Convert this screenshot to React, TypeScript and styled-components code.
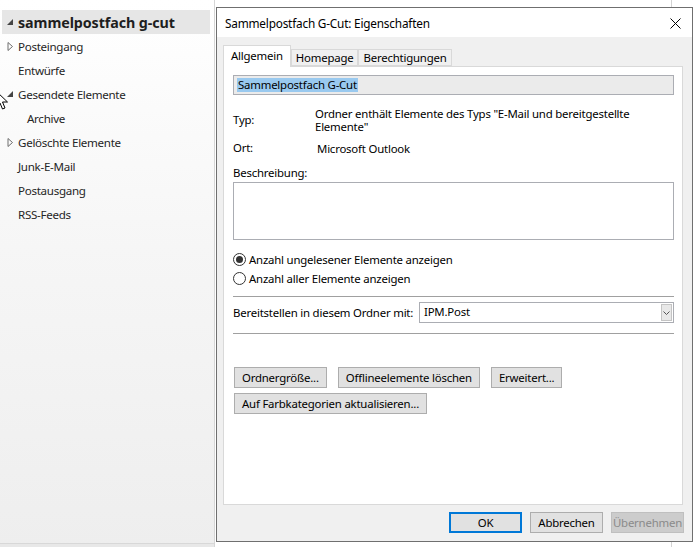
import React from 'react';
import styled, { createGlobalStyle } from 'styled-components';

const GlobalStyle = createGlobalStyle`
  html, body {
    margin: 0;
    padding: 0;
    background: #ffffff;
  }
  body {
    font-family: "Segoe UI", "Noto Sans", "Liberation Sans", sans-serif;
    font-size: 11.4px;
    letter-spacing: -0.2px;
    color: #000000;
  }
  * {
    box-sizing: border-box;
  }
`;

interface Folder {
  name: string;
  indent: number;
  arrow: 'none' | 'collapsed' | 'expanded';
}

const folders: Folder[] = [
  { name: 'Posteingang', indent: 0, arrow: 'collapsed' },
  { name: 'Entwürfe', indent: 0, arrow: 'none' },
  { name: 'Gesendete Elemente', indent: 0, arrow: 'expanded' },
  { name: 'Archive', indent: 1, arrow: 'none' },
  { name: 'Gelöschte Elemente', indent: 0, arrow: 'collapsed' },
  { name: 'Junk-E-Mail', indent: 0, arrow: 'none' },
  { name: 'Postausgang', indent: 0, arrow: 'none' },
  { name: 'RSS-Feeds', indent: 0, arrow: 'none' }
];

const Page = styled.div`
  position: relative;
  display: flex;
  width: 695px;
  height: 547px;
  overflow: hidden;
`;

// Ordnerbereich links
const FolderPane = styled.nav`
  width: 215px;
  flex-shrink: 0;
  display: flex;
  flex-direction: column;
  padding-top: 10px;
  border-right: 1px solid #d6d6d6;
  background: linear-gradient(to bottom, #ffffff 0%, #f6f6f6 45%, #eeeeee 100%);
`;

const AccountRow = styled.div`
  display: flex;
  align-items: center;
  height: 24px;
  margin: 0 4px 0 2px;
  padding-left: 5px;
  gap: 5px;
  background: #e6e6e6;
  font-size: 14.3px;
  font-weight: 700;
  letter-spacing: -0.1px;
  color: #1e1e1e;
`;

const FolderRow = styled.div<{ $indent: number }>`
  display: flex;
  align-items: center;
  height: 24px;
  padding-left: ${({ $indent }) => 7 + $indent * 9}px;
  font-size: 11.6px;
  letter-spacing: -0.3px;
  color: #262626;
`;

const ArrowSlot = styled.span`
  width: 11px;
  display: inline-flex;
  align-items: center;
  justify-content: flex-start;
`;

const PaneSpacer = styled.div`
  flex: 1;
`;

const PaneScroll = styled.div`
  height: 4px;
  border-top: 1px solid #d8d8d8;
  background: #e8e8e8;
`;

const Cursor = styled.svg`
  position: absolute;
  left: -4px;
  top: 91px;
`;

// Rechter Bereich mit dem Eigenschaften-Dialog
const Workspace = styled.main`
  flex: 1;
  padding: 7px 0 0 1px;
  background: linear-gradient(
    to right,
    transparent 456px,
    #d3d3d3 456px,
    #d3d3d3 457px,
    transparent 457px
  );
`;

const Dialog = styled.section`
  width: 477px;
  height: 535px;
  display: flex;
  flex-direction: column;
  border: 1px solid #6f6f6f;
  background: #f0f0f0;
`;

const TitleBar = styled.header`
  display: flex;
  align-items: center;
  justify-content: space-between;
  height: 29px;
  padding: 1px 11px 0 8px;
  background: #ffffff;
  font-size: 11.8px;
`;

const DialogBody = styled.div`
  flex: 1;
  display: flex;
  flex-direction: column;
  padding: 8px 9px 0 6px;
`;

const TabStrip = styled.div`
  display: flex;
  align-items: flex-end;
  height: 21px;
  position: relative;
  z-index: 1;
`;

const Tab = styled.div<{ $active?: boolean }>`
  display: flex;
  align-items: center;
  height: ${({ $active }) => ($active ? '22px' : '17px')};
  margin-bottom: ${({ $active }) => ($active ? '-1px' : '0')};
  padding: ${({ $active }) => ($active ? '0 7px 2px 7px' : '0 4px 1px 4px')};
  border: 1px solid #d9d9d9;
  border-bottom: ${({ $active }) => ($active ? 'none' : '1px solid #d9d9d9')};
  border-left: ${({ $active }) => ($active ? '1px solid #d9d9d9' : 'none')};
  background: ${({ $active }) => ($active ? '#ffffff' : '#f0f0f0')};
  & + & {
    border-left: 1px solid #d9d9d9;
  }
`;

const TabPanel = styled.div`
  height: 439px;
  display: flex;
  flex-direction: column;
  padding: 8px 8px 0 9px;
  border: 1px solid #d9d9d9;
  background: #ffffff;
`;

const NameField = styled.div`
  height: 20px;
  display: flex;
  align-items: center;
  padding-left: 3px;
  border: 1px solid #abadb3;
  background: #ebebeb;
`;

const Selected = styled.span`
  background: #99c9ef;
  line-height: 14px;
  padding: 0 1px;
`;

const InfoGrid = styled.div`
  display: grid;
  grid-template-columns: 82px 1fr;
  row-gap: 7px;
  align-items: center;
  margin-top: 12px;
`;

const InfoValue = styled.div<{ $shift?: number }>`
  line-height: 13px;
  padding-left: ${({ $shift }) => $shift ?? 0}px;
  padding-right: 30px;
`;

const Label = styled.div`
  line-height: 16px;
`;

const DescLabel = styled(Label)`
  margin-top: 9px;
`;

const DescBox = styled.div`
  height: 58px;
  margin-top: 1px;
  border: 1px solid #abadb3;
  background: #ffffff;
`;

const RadioGroup = styled.div`
  display: flex;
  flex-direction: column;
  gap: 1px;
  margin-top: 10px;
`;

const RadioRow = styled.label`
  display: flex;
  align-items: center;
  height: 18px;
  gap: 3px;
`;

const RadioCircle = styled.span<{ $checked?: boolean }>`
  width: 13px;
  height: 13px;
  border-radius: 50%;
  border: 1px solid #333333;
  background: #ffffff;
  display: inline-flex;
  align-items: center;
  justify-content: center;
  &::after {
    content: '';
    width: 7px;
    height: 7px;
    border-radius: 50%;
    background: ${({ $checked }) => ($checked ? '#333333' : 'transparent')};
  }
`;

const Separator = styled.hr<{ $top: number }>`
  margin: ${({ $top }) => $top}px 0 0 0;
  border: none;
  border-top: 1px solid #a0a0a0;
  height: 0;
`;

const ComboRow = styled.div`
  display: flex;
  align-items: center;
  justify-content: space-between;
  margin-top: 5px;
  white-space: nowrap;
`;

const Combo = styled.div`
  width: 255px;
  height: 21px;
  display: flex;
  align-items: center;
  justify-content: space-between;
  padding: 0 1px 2px 4px;
  border: 1px solid #abadb3;
  background: #ffffff;
`;

const ComboButton = styled.span`
  width: 11px;
  height: 17px;
  margin-top: 2px;
  display: inline-flex;
  align-items: center;
  justify-content: center;
  border: 1px solid #c4c4c4;
  background: #e8e8e8;
`;

const ActionRows = styled.div`
  display: flex;
  flex-direction: column;
  gap: 5px;
  margin-top: 33px;
`;

const ActionRow = styled.div`
  display: flex;
  gap: 11px;
  padding-left: 1px;
`;

const Button = styled.button<{ $width?: number; $primary?: boolean }>`
  height: 21px;
  ${({ $width }) => ($width ? `width: ${$width}px; padding: 0;` : 'padding: 0 7px;')}
  font-family: inherit;
  font-size: 11.4px;
  letter-spacing: inherit;
  color: #000000;
  background: #e1e1e1;
  border: 1px solid #adadad;
  border-radius: 0;
  white-space: nowrap;
  box-shadow: ${({ $primary }) => ($primary ? 'inset 0 0 0 1px #0078d7' : 'none')};
  border-color: ${({ $primary }) => ($primary ? '#0078d7' : '#adadad')};
  &:disabled {
    color: #8a8a8a;
    background: #cccccc;
    border-color: #bfbfbf;
  }
`;

const Footer = styled.footer`
  display: flex;
  justify-content: flex-end;
  gap: 8px;
  padding: 7px 0 0 0;
  margin-right: -1px;
`;

const CollapsedArrow = () => (
  <svg width="7" height="9" viewBox="0 0 7 9">
    <path d="M1 0.5 L5.5 4.5 L1 8.5 Z" fill="none" stroke="#6e6e6e" strokeWidth="1" />
  </svg>
);

const ExpandedArrow = ({ size = 6 }: { size?: number }) => (
  <svg width={size} height={size} viewBox="0 0 6 6">
    <path d="M6 0 L6 6 L0 6 Z" fill="#444444" />
  </svg>
);

const App: React.FC = () => {
  return (
    <Page>
      <GlobalStyle />
      <FolderPane>
        <AccountRow>
          <ExpandedArrow size={6} />
          <span>sammelpostfach g-cut</span>
        </AccountRow>
        {folders.map((folder) => (
          <FolderRow key={folder.name} $indent={folder.indent}>
            <ArrowSlot>
              {folder.arrow === 'collapsed' && <CollapsedArrow />}
              {folder.arrow === 'expanded' && <ExpandedArrow />}
            </ArrowSlot>
            <span>{folder.name}</span>
          </FolderRow>
        ))}
        <PaneSpacer />
        <PaneScroll />
      </FolderPane>

      <Cursor width="14" height="20" viewBox="0 0 14 20">
        <path
          d="M0.5 0.5 L0.5 15.5 L4 12 L6.5 18 L9 17 L6.5 11 L11.5 11 Z"
          fill="#ffffff"
          stroke="#000000"
          strokeWidth="1"
        />
      </Cursor>

      <Workspace>
        <Dialog>
          <TitleBar>
            <span>Sammelpostfach G-Cut: Eigenschaften</span>
            <svg width="11" height="11" viewBox="0 0 11 11">
              <path d="M0.5 0.5 L10.5 10.5 M10.5 0.5 L0.5 10.5" stroke="#000000" strokeWidth="1" />
            </svg>
          </TitleBar>

          <DialogBody>
            <TabStrip>
              <Tab $active>Allgemein</Tab>
              <Tab>Homepage</Tab>
              <Tab>Berechtigungen</Tab>
            </TabStrip>

            <TabPanel>
              <NameField>
                <Selected>Sammelpostfach G-Cut</Selected>
              </NameField>

              <InfoGrid>
                <Label>Typ:</Label>
                <InfoValue>Ordner enthält Elemente des Typs "E-Mail und bereitgestellte Elemente"</InfoValue>
                <Label>Ort:</Label>
                <InfoValue $shift={2}>Microsoft Outlook</InfoValue>
              </InfoGrid>

              <DescLabel>Beschreibung:</DescLabel>
              <DescBox />

              <RadioGroup>
                <RadioRow>
                  <RadioCircle $checked />
                  <span>Anzahl ungelesener Elemente anzeigen</span>
                </RadioRow>
                <RadioRow>
                  <RadioCircle />
                  <span>Anzahl aller Elemente anzeigen</span>
                </RadioRow>
              </RadioGroup>

              <Separator $top={9} />

              <ComboRow>
                <span>Bereitstellen in diesem Ordner mit:</span>
                <Combo>
                  <span>IPM.Post</span>
                  <ComboButton>
                    <svg width="7" height="4" viewBox="0 0 7 4">
                      <path d="M0.5 0.5 L3.5 3.5 L6.5 0.5" fill="none" stroke="#555555" strokeWidth="1" />
                    </svg>
                  </ComboButton>
                </Combo>
              </ComboRow>

              <Separator $top={10} />

              <ActionRows>
                <ActionRow>
                  <Button>Ordnergröße...</Button>
                  <Button>Offlineelemente löschen</Button>
                  <Button>Erweitert...</Button>
                </ActionRow>
                <ActionRow>
                  <Button>Auf Farbkategorien aktualisieren...</Button>
                </ActionRow>
              </ActionRows>
            </TabPanel>

            <Footer>
              <Button $width={73} $primary>OK</Button>
              <Button $width={73}>Abbrechen</Button>
              <Button $width={73} disabled>Übernehmen</Button>
            </Footer>
          </DialogBody>
        </Dialog>
      </Workspace>
    </Page>
  );
};

export default App;
